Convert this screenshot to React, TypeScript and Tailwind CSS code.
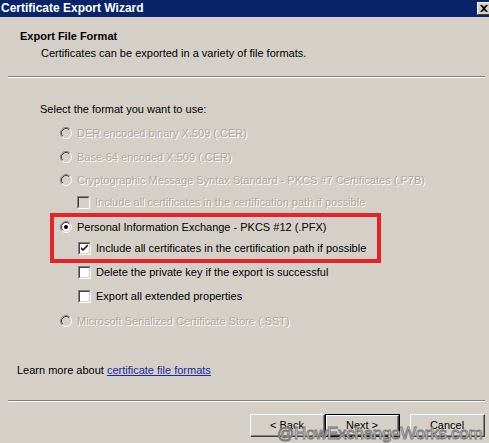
function Radio({ checked = false, disabled = false }: { checked?: boolean; disabled?: boolean }) {
  return (
    <svg width="12" height="12" viewBox="0 0 12 12" className="shrink-0">
      <circle cx="6" cy="6" r="4.5" fill={disabled ? "#d4d0c8" : "#ffffff"} />
      <path d="M2.11 9.89 A5.5 5.5 0 0 1 9.89 2.11" fill="none" stroke="#808080" strokeWidth="1" />
      <path d="M9.89 2.11 A5.5 5.5 0 0 1 2.11 9.89" fill="none" stroke="#ffffff" strokeWidth="1" />
      <path d="M2.82 9.18 A4.5 4.5 0 0 1 9.18 2.82" fill="none" stroke="#404040" strokeWidth="1" />
      <path d="M9.18 2.82 A4.5 4.5 0 0 1 2.82 9.18" fill="none" stroke="#d4d0c8" strokeWidth="1" />
      {checked && <circle cx="6" cy="6" r="2" fill="#000000" />}
    </svg>
  );
}

function Check({ checked = false, disabled = false }: { checked?: boolean; disabled?: boolean }) {
  return (
    <div className="w-[13px] h-[13px] shrink-0 border-t border-l border-t-[#808080] border-l-[#808080] border-b border-r border-b-white border-r-white">
      <div
        className={`w-full h-full border-t border-l border-t-[#404040] border-l-[#404040] border-b border-r border-b-[#d4d0c8] border-r-[#d4d0c8] flex items-center justify-center ${
          disabled ? "bg-[#d4d0c8]" : "bg-white"
        }`}
      >
        {checked && (
          <svg width="7" height="7" viewBox="0 0 7 7">
            <path d="M0 2 L0 4 L2 6 L7 1 L7 -1 L2 4 Z" fill="#000" />
          </svg>
        )}
      </div>
    </div>
  );
}

const dim = "text-[#ada99f] [text-shadow:1px_1px_0_#ffffff]";

function Button({ label, isDefault = false }: { label: string; isDefault?: boolean }) {
  return (
    <div className={`w-[75px] h-[23px] ${isDefault ? "border border-black" : ""}`}>
      <div className="w-full h-full border-t border-l border-t-white border-l-white border-b border-r border-b-[#404040] border-r-[#404040]">
        <div className="w-full h-full border-b border-r border-b-[#808080] border-r-[#808080] flex items-center justify-center text-black">
          {label}
        </div>
      </div>
    </div>
  );
}

function Separator() {
  return (
    <div className="ml-[8px] mr-[4px]">
      <div className="h-px bg-[#808080]" />
      <div className="h-px bg-white" />
    </div>
  );
}

export default function App() {
  return (
    <div className="w-[489px] h-[443px] bg-[#d4d0c8] relative overflow-hidden font-['Liberation_Sans',Arial,sans-serif] text-[11px] leading-[14px] text-black">
      <div className="h-[17px] bg-[#0a246a] flex items-center justify-between overflow-hidden">
        <span className="pl-[1px] text-white font-bold text-[12px] leading-[17px]">Certificate Export Wizard</span>
        <div className="w-[16px] h-[13px] -mr-[4px] bg-[#d4d0c8] border-t border-l border-t-white border-l-white border-b border-r border-b-[#404040] border-r-[#404040] flex items-center pl-[2px]">
          <svg width="8" height="7" viewBox="0 0 8 7">
            <path d="M0 0 L2 0 L4 2 L6 0 L8 0 L5 3.5 L8 7 L6 7 L4 5 L2 7 L0 7 L3 3.5 Z" fill="#000" />
          </svg>
        </div>
      </div>

      <div className="pt-[12px] pl-[20px] font-bold">Export File Format</div>
      <div className="mt-[3px] pl-[41px]">Certificates can be exported in a variety of file formats.</div>
      <div className="mt-[16px]">
        <Separator />
      </div>

      <div className="mt-[24px] pl-[40px]">Select the format you want to use:</div>

      <div className="mt-[10px] pl-[60px] flex items-center gap-[5px]">
        <Radio disabled />
        <span className={dim}>DER encoded binary X.509 (.CER)</span>
      </div>
      <div className="mt-[10px] pl-[60px] flex items-center gap-[5px]">
        <Radio disabled />
        <span className={dim}>Base-64 encoded X.509 (.CER)</span>
      </div>
      <div className="mt-[9px] pl-[60px] flex items-center gap-[5px]">
        <Radio disabled />
        <span className={dim}>Cryptographic Message Syntax Standard - PKCS #7 Certificates (.P7B)</span>
      </div>
      <div className="mt-[8px] pl-[77px] flex items-center gap-[5px]">
        <Check disabled />
        <span className={dim}>Include all certificates in the certification path if possible</span>
      </div>

      <div className="relative mt-[11px]">
        <div className="pl-[60px] flex items-center gap-[5px]">
          <Radio checked />
          <span>Personal Information Exchange - PKCS #12 (.PFX)</span>
        </div>
        <div className="mt-[7px] pl-[78px] flex items-center gap-[5px]">
          <Check checked />
          <span>Include all certificates in the certification path if possible</span>
        </div>
        <div className="absolute left-[50px] -top-[7px] -bottom-[8px] w-[331px] border-4 border-[#e3242b]" />
      </div>

      <div className="mt-[10px] pl-[78px] flex items-center gap-[5px]">
        <Check />
        <span>Delete the private key if the export is successful</span>
      </div>
      <div className="mt-[10px] pl-[78px] flex items-center gap-[5px]">
        <Check />
        <span>Export all extended properties</span>
      </div>
      <div className="mt-[11px] pl-[60px] flex items-center gap-[5px]">
        <Radio disabled />
        <span className={dim}>Microsoft Serialized Certificate Store (.SST)</span>
      </div>

      <div className="mt-[35px] pl-[17px]">
        Learn more about <span className="text-[#1a2a9c] underline">certificate file formats</span>
      </div>

      <div className="mt-[23px]">
        <Separator />
      </div>

      <div className="mt-[12px] pl-[250px] flex">
        <Button label="< Back" />
        <Button label="Next >" isDefault />
        <div className="w-[10px]" />
        <Button label="Cancel" />
      </div>

      <div className="absolute left-[277px] top-[425px] text-[17px] leading-none font-['Liberation_Sans',Arial,sans-serif] text-white tracking-[-0.3px] [-webkit-text-stroke:1px_#7a7a7a]">
        @HowExchangeWorks.com
      </div>
    </div>
  );
}
